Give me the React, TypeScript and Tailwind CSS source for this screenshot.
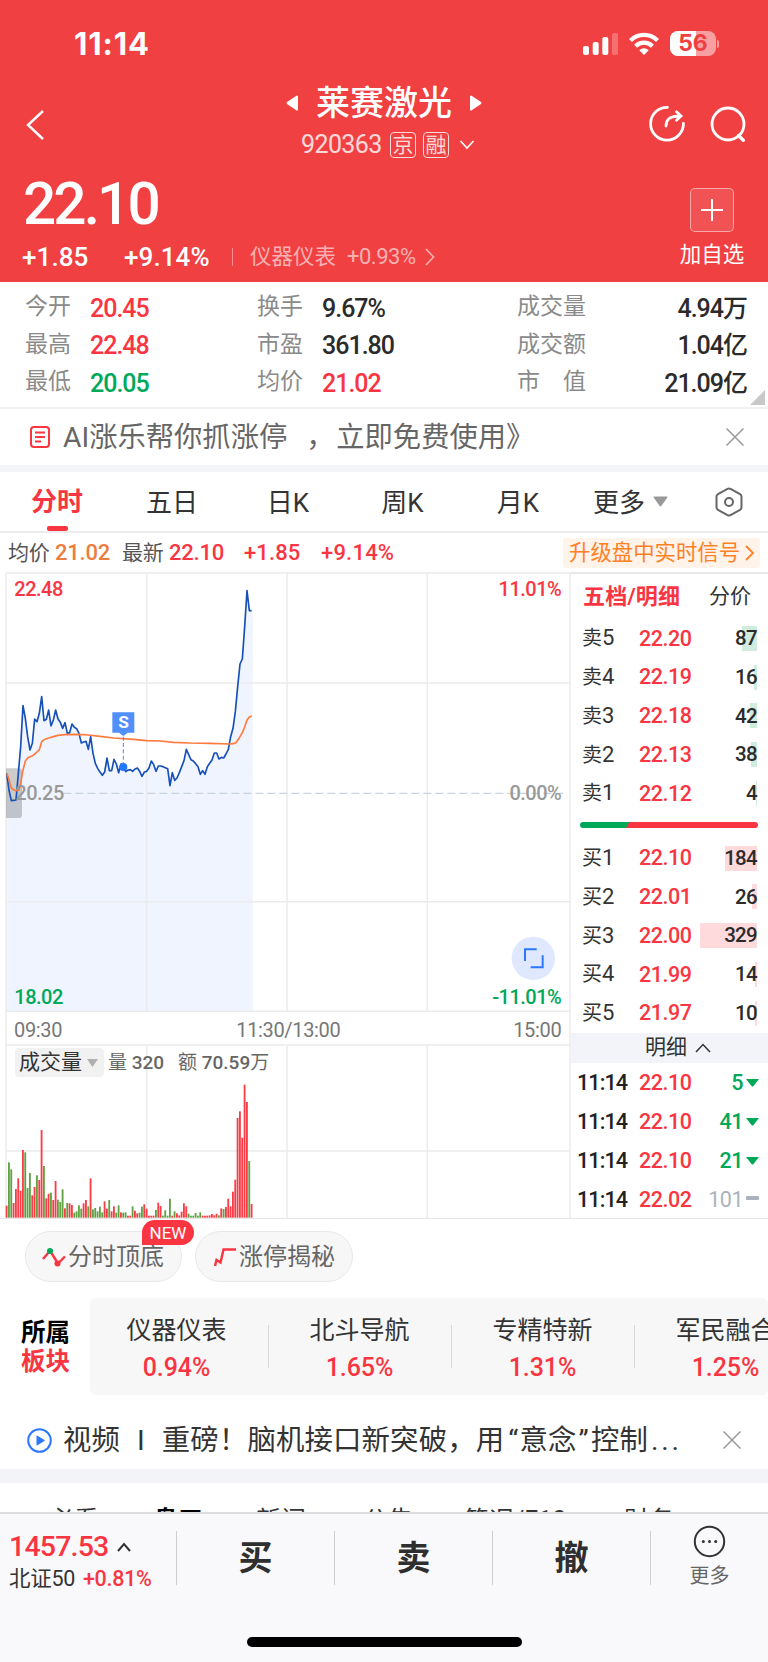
import type { ReactNode } from 'react'
import clsx from 'clsx'

const UP = 'text-[#fa3542]'
const DOWN = 'text-[#00a85a]'

// One sample per minute from 09:30, 7 units apart, in the price chart's own units
const PRICE = [
  640, 690, 722, 721, 720, 640, 560, 437, 475, 530, 570, 550, 477, 485, 460, 410, 482, 478, 450, 498,
  480, 450, 477, 487, 505, 488, 520, 518, 492, 502, 506, 520, 549, 546, 544, 568, 530, 580, 610, 625,
  636, 646, 636, 594, 632, 632, 598, 612, 638, 612, 621, 635, 630, 629, 634, 627, 624, 634, 649, 636,
  634, 624, 603, 614, 634, 618, 618, 620, 623, 626, 677, 638, 661, 654, 638, 620, 602, 568, 584, 599,
  603, 611, 620, 643, 632, 643, 620, 610, 600, 579, 579, 597, 592, 594, 582, 568, 530, 505, 455, 380,
  312, 297, 200, 92, 152, 152,
]

const AVERAGE =
  '20,640 26,655 33,682 40,689 48,692 57,690 62,670 68,635 76,603 83,594 90,590 98,587 108,579 118,569 125,545 132,539 146,534 160,530 174,526 195,524 237,523 265,525 300,529 342,534 400,538 440,542 480,543 520,547 570,549 630,550 688,552 700,551 708,548 715,538 727,518 734,501 741,480 748,471 755,468'

// Negative means the minute closed down
const VOLUME = [
  36, -166, -145, 44, 86, 118, 81, 203, -196, -89, -134, 67, 92, -127, 113, 263, -155, 58, 72, -75,
  53, 110, -54, -47, -85, 28, -44, 43, 38, -15, -19, -37, -27, 43, 53, -34, 118, -25, -29, -19, -33,
  -16, 49, 27, -53, 19, 34, -15, -37, 16, -15, -16, 6, 6, -34, 21, 13, -15, -33, 40, 27, 6, 6, 6,
  -23, 45, 35, -6, -22, -6, -57, 6, -19, 13, 7, 18, 43, 34, -12, -6, -6, -14, -6, -16, 6, 6, 6, 7,
  11, 7, 12, -7, 28, -26, 32, 57, 34, 78, 114, 299, 319, 240, 399, 347, -170, 41,
]

const SELLS = [
  { label: '卖5', price: '22.20', qty: 87, bar: 15.5 },
  { label: '卖4', price: '22.19', qty: 16, bar: 3 },
  { label: '卖3', price: '22.18', qty: 42, bar: 7 },
  { label: '卖2', price: '22.13', qty: 38, bar: 6.5 },
  { label: '卖1', price: '22.12', qty: 4, bar: 0.7 },
]

const BUYS = [
  { label: '买1', price: '22.10', qty: 184, bar: 32 },
  { label: '买2', price: '22.01', qty: 26, bar: 5 },
  { label: '买3', price: '22.00', qty: 329, bar: 57 },
  { label: '买4', price: '21.99', qty: 14, bar: 2.3 },
  { label: '买5', price: '21.97', qty: 10, bar: 1.6 },
]

const TICKS = [
  { price: '22.10', qty: 5, down: true },
  { price: '22.10', qty: 41, down: true },
  { price: '22.10', qty: 21, down: true },
  { price: '22.02', qty: 101, down: false },
]

const SECTORS = [
  { name: '仪器仪表', pct: '0.94%' },
  { name: '北斗导航', pct: '1.65%' },
  { name: '专精特新', pct: '1.31%' },
  { name: '军民融合', pct: '1.25%' },
]

function StatusBar() {
  return (
    <div className="h-[84px] pt-[26px] pl-[74px] pr-[49px] flex items-start justify-between">
      <span className="font-['Inter'] font-bold text-[31px] leading-9 tracking-[0.900px]">11:14</span>
      <div className="flex items-center pt-[5px]">
        <svg width="36" height="24" viewBox="0 0 36 24" fill="#fff">
          <rect x="0" y="14" width="6" height="9" rx="2" />
          <rect x="9.7" y="10" width="6" height="13" rx="2" />
          <rect x="19.3" y="5" width="6" height="18" rx="2" />
          <rect x="29" y="1" width="6" height="22" rx="2" opacity=".25" />
        </svg>
        <svg className="ml-[9px]" width="32" height="24" viewBox="0 0 32 24" fill="none" stroke="#fff" strokeWidth="4.2">
          <path d="M2.5 8.6a19 19 0 0 1 27 0" />
          <path d="M7.6 14.2a11.8 11.8 0 0 1 16.800 0" />
          <path d="M11.300 18.200a6.800 6.800 0 0 1 9.400 0L16 23Z" fill="#fff" stroke="none" />
        </svg>
        <div className="ml-[10px] relative w-[46px] h-[25px] rounded-[8px] overflow-hidden bg-white/50">
          <div className="w-[26px] h-full bg-white" />
          <span className="absolute inset-0 text-center font-['Inter'] font-bold text-[23px] leading-[25px] text-[#f03e41]">
            56
          </span>
        </div>
        <div className="ml-[1px] w-[2px] h-[8px] rounded-r bg-white/50" />
      </div>
    </div>
  )
}

function Header() {
  return (
    <header className="h-[282px] bg-[#f04042] text-white">
      <StatusBar />
      <div className="h-[80px] flex">
        <div className="w-[270px] pt-[25px] pl-[25px]">
          <svg width="20" height="32" viewBox="0 0 20 32" fill="none" stroke="#fff" strokeWidth="2.4">
            <path d="M18 2 3 16l15 14" />
          </svg>
        </div>
        <div className="w-[228px]">
          <div className="h-[37px] flex items-center justify-center">
            <svg width="12" height="16" viewBox="0 0 12 16" fill="#fff">
              <path d="M12 1v14q-1 1-2 0L1 9q-1-1 0-2l9-6q1-1 2 0" />
            </svg>
            <span className="mx-[18px] text-[34px] leading-none font-medium">莱赛激光</span>
            <svg width="12" height="16" viewBox="0 0 12 16" fill="#fff">
              <path d="M0 1v14q1 1 2 0l9-6q1-1 0-2L2 1q-1-1-2 0" />
            </svg>
          </div>
          <div className="h-[46px] flex items-center pl-[31px] pt-px text-white/80">
            <span className="w-[89px] text-[25px] tracking-[-0.600px] leading-none">920363</span>
            <span className="size-[26px] rounded-[4px] border border-white/80 text-[21px] leading-[24px] text-center">京</span>
            <span className="ml-[7px] size-[26px] rounded-[4px] border border-white/80 text-[21px] leading-[24px] text-center">融</span>
            <svg className="ml-[10px]" width="16" height="10" viewBox="0 0 16 10" fill="none" stroke="#fff" strokeWidth="1.6">
              <path d="m1.500 1 6.500 7 6.500-7" />
            </svg>
          </div>
        </div>
        <div className="flex-1 flex justify-end gap-[23px] pt-[21px] pr-[21px]">
          <svg width="38" height="38" viewBox="0 0 38 38" fill="none" stroke="#fff" strokeWidth="2.800" strokeLinecap="round">
            <path d="M19.500 2.300A16.400 16.400 0 1 0 35.400 18.500" />
            <path d="M18 21c0-6 3-10 14.500-10M28.500 6.800l4.500 4.200-4.500 4.200" />
          </svg>
          <svg width="38" height="38" viewBox="0 0 38 38" fill="none" stroke="#fff" strokeWidth="2.800" strokeLinecap="round">
            <circle cx="19" cy="19" r="16" />
            <path d="m29.500 30.500 4.800 4.800" strokeWidth="3.400" />
          </svg>
        </div>
      </div>
      <div className="flex justify-between pl-[23px]">
        <div>
          <div className="mt-[12px] h-[56px] text-[58.500px] leading-[56px] font-medium tracking-[-2.900px]">22.10</div>
          <div className="mt-[9px] h-[32px] flex items-center text-[26px] leading-none font-medium tracking-[0.100px]">
            <span className="w-[101px] -ml-px mr-px">+1.85</span>
            <span className="w-[108px]">+9.14%</span>
            <span className="w-px h-[18px] mr-[17px] bg-white/40" />
            <span className="text-[21.500px] tracking-normal font-normal text-white/60">仪器仪表</span>
            <span className="ml-[11px] text-[22px] tracking-[-0.500px] font-normal text-white/60">+0.93%</span>
            <svg className="ml-[9px]" width="10" height="18" viewBox="0 0 10 18" fill="none" stroke="#fff" strokeOpacity=".6" strokeWidth="1.6">
              <path d="m1 1 7.500 8L1 17" />
            </svg>
          </div>
        </div>
        <div className="w-[112px] flex flex-col items-center">
          <div className="mt-[24px] size-[44px] rounded-[5px] border border-white/50 bg-white/10 flex items-center justify-center">
            <svg width="22" height="22" viewBox="0 0 22 22" stroke="#fff" strokeWidth="2">
              <path d="M11 0v22M0 11h22" />
            </svg>
          </div>
          <span className="mt-[12px] text-[21.500px] leading-none">加自选</span>
        </div>
      </div>
    </header>
  )
}

function Stat({ label, value, color = 'text-[#2b2b2b]' }: { label: ReactNode; value: string; color?: string }) {
  return (
    <div className="flex items-center h-[37.600px]">
      <span className="text-[23px] leading-none text-[#8a8a8a] w-[65px] whitespace-nowrap">{label}</span>
      <span className={clsx('text-[25px] leading-none font-medium tracking-[-1px] pt-[3px]', color)}>{value}</span>
    </div>
  )
}

function Stats() {
  return (
    <section className="relative h-[127px] flex pt-[6px] pl-[25px] border-b-2 border-[#f1f1f3]">
      <div className="w-[232px]">
        <Stat label="今开" value="20.45" color={UP} />
        <Stat label="最高" value="22.48" color={UP} />
        <Stat label="最低" value="20.05" color={DOWN} />
      </div>
      <div className="w-[260px]">
        <Stat label="换手" value="9.67%" />
        <Stat label="市盈" value="361.80" />
        <Stat label="均价" value="21.02" color={UP} />
      </div>
      <div className="w-[230px] [&>div]:justify-between">
        <Stat label="成交量" value="4.94万" />
        <Stat label="成交额" value="1.04亿" />
        <Stat label="市　值" value="21.09亿" />
      </div>
      <svg className="absolute right-[3px] bottom-[2px]" width="15" height="15" viewBox="0 0 15 15" fill="#c8c8c8">
        <path d="M15 0v15H0Z" />
      </svg>
    </section>
  )
}

function Close() {
  return (
    <svg width="18" height="18" viewBox="0 0 18 18" stroke="#999" strokeWidth="1.500">
      <path d="m.5.5 17 17M17.500.5l-17 17" />
    </svg>
  )
}

function Banner() {
  return (
    <div className="h-[56px] flex items-center pl-[30px] pr-[24px] text-[28.300px] text-[#666]">
      <svg width="20" height="22" viewBox="0 0 20 22" fill="none" stroke="#fa3542" strokeWidth="2">
        <rect x="1" y="1" width="18" height="20" rx="3" />
        <path d="M5 6.500h10M5 11h10M5 15.500h6" />
      </svg>
      <span className="ml-[13px] pt-[3px] leading-none">AI涨乐帮你抓涨停</span>
      <span className="ml-[19px] pt-[3px] w-[30px] leading-none">，</span>
      <span className="flex-1 pt-[3px] leading-none">立即免费使用》</span>
      <Close />
    </div>
  )
}

function PeriodTabs() {
  return (
    <nav className="h-[61px] flex items-center border-b-2 border-[#ececee] text-[26px] leading-none text-[#333]">
      <span className={clsx('relative w-[116px] h-full pl-[31px] leading-[61px] font-bold', UP)}>
        分时
        <span className="absolute left-[47px] bottom-[0px] w-[21px] h-[5px] rounded-[2px] bg-[#fa3542]" />
      </span>
      <span className="w-[112px] pt-[2px] text-center">五日</span>
      <span className="w-[120px] pt-[2px] text-center">日K</span>
      <span className="w-[109px] pt-[2px] text-center">周K</span>
      <span className="w-[122px] pt-[2px] text-center">月K</span>
      <span className="ml-[14px] pt-[2px]">更多</span>
      <svg className="ml-[8px]" width="15" height="11" viewBox="0 0 15 11" fill="#999">
        <path d="M1.500.5h12q1.500 0 .7 1.200l-5.700 8q-1 1.300-2 0L.8 1.700Q0 .5 1.500.5" />
      </svg>
      <svg className="ml-[46px]" width="30" height="30" viewBox="0 0 30 30" fill="none" stroke="#666" strokeWidth="2">
        <path d="M13.500 1.800q1.500-.8 3 0l9.500 5.300q1.500.9 1.500 2.600v10.600q0 1.700-1.500 2.600l-9.500 5.300q-1.500.8-3 0L4 22.900q-1.500-.9-1.500-2.600V9.700q0-1.700 1.500-2.600Z" />
        <circle cx="15" cy="15" r="4" />
      </svg>
    </nav>
  )
}

function QuoteLine() {
  return (
    <div className="h-[39px] flex items-center pt-px pl-[8px] pr-[8px] text-[22px] leading-none tracking-[-0.200px]">
      <span className="w-[47px] text-[21px] text-[#555]">均价</span>
      <span className="w-[67px] font-medium text-[#ed7d3f]">21.02</span>
      <span className="w-[47px] text-[21px] text-[#555]">最新</span>
      <span className={clsx('w-[75px] font-medium', UP)}>22.10</span>
      <span className={clsx('w-[77px] font-medium tracking-[0.100px]', UP)}>+1.85</span>
      <span className={clsx('flex-1 font-medium tracking-[0.200px]', UP)}>+9.14%</span>
      <span className="w-[197px] h-[30px] rounded-[3px] bg-[#fff3ea] pl-[6px] flex items-center text-[21.400px] tracking-normal text-[#ff8025]">
        升级盘中实时信号
        <svg className="ml-[5px]" width="10" height="16" viewBox="0 0 10 16" fill="none" stroke="#ff8025" strokeWidth="1.800">
          <path d="m1 1 7 7-7 7" />
        </svg>
      </span>
    </div>
  )
}

function PriceChart() {
  const line = PRICE.map((y, i) => `${20 + i * 7},${y}`).join(' ')
  return (
    <svg className="block" width="571" height="474" viewBox="0 36 1713 1422" fill="none">
      <polygon points={`20,1353 ${line} 758,152 758,1353`} fill="#eff4ff" />
      <g stroke="#ebebed" strokeWidth="4.500">
        <path d="M18 39H1713M18 369H1710M18 1025H1710M18 1354H1710M18 1455H1710" />
        <path d="M18 39V1458M440 39V1354M861 39V1354M1282 39V1354M1710 39V1458" />
      </g>
      <path d="M190 700H1702" stroke="#c9d3df" strokeWidth="3.500" strokeDasharray="24 12" />
      <path d="M18 625H56q10 0 10 10v129q0 10-10 10H18Z" fill="#000" fillOpacity=".2" />
      <polyline points={line} stroke="#1650b8" strokeWidth="5" strokeLinejoin="round" />
      <polyline points={AVERAGE} stroke="#ff7a3d" strokeWidth="5" strokeLinejoin="round" />
      <path d="M370 530V610" stroke="#4a8cf7" strokeWidth="3" strokeDasharray="12 7" />
      <circle cx="370" cy="621" r="12" fill="#2478ff" />
      <path d="M337 457h66v61h-20l-13 10-13-10h-20Z" fill="#508ffc" />
      <circle cx="1600" cy="1195" r="65" fill="#dfe8fe" />
      <path d="M1575 1203v-35h35M1592 1222h36v-36" stroke="#2b78ff" strokeWidth="6" />
      <g className="font-medium" fontSize="60" letterSpacing="-1.5">
        <text x="370" y="505" fontSize="52" textAnchor="middle" fill="#fff" className="font-bold">S</text>
        <text x="43" y="109" fill="#fa3542">22.48</text>
        <text x="1684" y="109" textAnchor="end" fill="#fa3542">11.01%</text>
        <text x="46" y="721" fill="#999">20.25</text>
        <text x="1684" y="721" textAnchor="end" fill="#999">0.00%</text>
        <text x="43" y="1331" fill="#00a85a">18.02</text>
        <text x="1684" y="1331" textAnchor="end" fill="#00a85a">-11.01%</text>
      </g>
      <g fontSize="60" letterSpacing="-1" fill="#777">
        <text x="42" y="1430">09:30</text>
        <text x="865" y="1430" textAnchor="middle">11:30/13:00</text>
        <text x="1684" y="1430" textAnchor="end">15:00</text>
      </g>
    </svg>
  )
}

function VolumeChart() {
  return (
    <div className="relative">
      <svg className="block" width="571" height="173" viewBox="0 738 1713 519" fill="none">
        <g stroke="#ebebed" strokeWidth="4.500">
          <path d="M18 1053H1710" />
          <path d="M18 738V1254M440 738V1254M861 738V1254M1282 738V1254M1710 738V1254" />
        </g>
        {VOLUME.map((v, i) => {
          const h = Math.abs(v)
          return <rect key={i} x={17 + i * 7} y={1253 - h} width="5.500" height={h} fill={v > 0 ? '#fa3c46' : '#5fa243'} />
        })}
      </svg>
      <div className="absolute left-[15px] top-[2px] flex items-center text-[19px] leading-none text-[#666]">
        <span className="w-[89px] h-[29px] rounded-[4px] bg-[#f1f1f1] pl-[4px] flex items-center text-[21px] text-[#333]">
          成交量
          <svg className="ml-[5px]" width="11" height="8" viewBox="0 0 11 8" fill="#b0b0b0">
            <path d="M0 0h11L5.500 8Z" />
          </svg>
        </span>
        <span className="ml-[4px] w-[70px]">量 <span className="font-medium">320</span></span>
        <span>额 <span className="font-medium">70.59</span>万</span>
      </div>
    </div>
  )
}

function BookRow({ label, price, qty, bar, tint }: (typeof SELLS)[number] & { tint: string }) {
  return (
    <div className="h-[38.900px] flex items-center pl-[11px] pr-[11px] text-[21.500px] leading-none">
      <span className="w-[57px] text-[20px] text-[#333]">
        {label[0]}<span className="text-[22px]">{label[1]}</span>
      </span>
      <span className={clsx('font-medium tracking-[-0.500px]', UP)}>{price}</span>
      <span className="relative flex-1 h-[25px] flex items-center justify-end">
        <span className={clsx('absolute right-0 top-0 h-full', tint)} style={{ width: bar }} />
        <span className="relative text-[20.500px] font-medium tracking-[-0.700px] text-[#2b2b2b]">{qty}</span>
      </span>
    </div>
  )
}

function OrderBook() {
  return (
    <div className="w-[197px] h-[646px] border-t-2 border-[#e8e8ea] flex flex-col">
      <div className="h-[45px] shrink-0 flex items-center justify-between pl-[12px] pr-[17px] text-[21px] leading-none">
        <span className={clsx('font-bold text-[22px] tracking-[0.200px]', UP)}>五档/明细</span>
        <span className="text-[#333]">分价</span>
      </div>
      {SELLS.map((r) => (
        <BookRow key={r.label} {...r} tint="bg-[#cfecdf]" />
      ))}
      <div className="mt-[9px] mb-[11px] ml-[9px] w-[178px] h-[6px] shrink-0 rounded-full bg-[linear-gradient(120deg,#00a85a_27%,#fa3542_27.500%)]" />
      {BUYS.map((r) => (
        <BookRow key={r.label} {...r} tint="bg-[#fedadd]" />
      ))}
      <div className="h-[30px] shrink-0 bg-[#f2f4f9] flex items-center justify-center gap-[8px] pl-[17px] text-[21px] leading-none text-[#333]">
        明细
        <svg width="16" height="10" viewBox="0 0 16 10" fill="none" stroke="#333" strokeWidth="1.500">
          <path d="m1 9 7-7.500L15 9" />
        </svg>
      </div>
      {TICKS.map((t, i) => (
        <div key={i} className="h-[38.900px] shrink-0 flex items-center pt-[2px] pl-[6px] pr-[9px] text-[21.500px] leading-none font-medium tracking-[-0.500px]">
          <span className="w-[62px] text-[#222] tracking-[-0.900px]">11:14</span>
          <span className={clsx('flex-1', UP)}>{t.price}</span>
          <span className={clsx('mr-[3px]', t.down ? DOWN : 'text-[#aab3bd] font-normal')}>{t.qty}</span>
          {t.down ? (
            <svg width="13" height="8" viewBox="0 0 13 8" fill="#00a85a"><path d="M0 0h13L7.500 7q-1 1-2 0Z" /></svg>
          ) : (
            <span className="w-[13px] h-[4px] mb-[3px] rounded-[1px] bg-[#aab3bd]" />
          )}
        </div>
      ))}
    </div>
  )
}

function Pills() {
  return (
    <div className="h-[79px] pt-[12px] pl-[25px] flex gap-[13px] text-[24px] leading-none text-[#666]">
      <div className="relative w-[157px] h-[51px] rounded-full border border-[#e8e8e8] bg-[#f7f7f7] flex items-center pl-[16px]">
        <svg className="mr-[2px]" width="24" height="20" viewBox="0 0 24 20" fill="none" stroke="#fa3542" strokeWidth="2.400">
          <path d="m1 12 6-7M9.500 6l5.500 9M16 16.500l7-7" />
          <circle cx="8" cy="4" r="3" fill="#00a85a" stroke="none" />
          <circle cx="15.500" cy="16.500" r="3" fill="#fa3542" stroke="none" />
        </svg>
        分时顶底
        <span className="absolute left-[116px] -top-[12px] w-[52px] h-[25px] rounded-[13px] rounded-bl-none bg-[#fa3542] text-white text-[17px] leading-[27px] text-center">
          NEW
        </span>
      </div>
      <div className="w-[158px] h-[51px] rounded-full border border-[#e8e8e8] bg-[#f7f7f7] flex items-center pl-[17px]">
        <svg className="mr-[2px]" width="24" height="20" viewBox="0 0 24 20" fill="none" stroke="#fa3542" strokeWidth="2.400">
          <path d="m2 19 1.500-6 4 2.500L10.500 2.500H23" />
        </svg>
        涨停揭秘
      </div>
    </div>
  )
}

function Sectors() {
  return (
    <section className="h-[97px] flex">
      <div className="w-[90px] pl-[21px] pt-[20px] text-[24.500px] leading-[29px] font-bold text-black">
        所属
        <div className={UP}>板块</div>
      </div>
      <div className="w-[678px] rounded-[6px] bg-[#f7f7f7] flex overflow-hidden">
        {SECTORS.map((s, i) => (
          <div key={s.name} className={clsx('relative shrink-0 flex flex-col items-center', i ? 'w-[183px]' : 'w-[179px] pr-[4px]')}>
            <span className="mt-[20px] -ml-[2px] text-[25px] leading-[25px] text-[#333]">{s.name}</span>
            <span className={clsx('-ml-[2px] mt-[12px] text-[25px] leading-[25px] font-medium tracking-[-0.100px]', UP)}>{s.pct}</span>
            {i < 3 && <span className="absolute right-0 top-[27px] w-[1.500px] h-[43px] bg-[#d8d8d8]" />}
          </div>
        ))}
      </div>
    </section>
  )
}

function VideoLine() {
  return (
    <div className="h-[74px] pt-[16px] flex items-center pl-[27px] pr-[27px] text-[28.400px] leading-none text-[#333]">
      <svg width="25" height="25" viewBox="0 0 25 25" fill="none">
        <circle cx="12.500" cy="12.500" r="11.300" stroke="#2b78ff" strokeWidth="2" />
        <path d="M9.500 8.200v8.600q0 1 .9.500l7-4.300q.7-.5 0-1l-7-4.300q-.9-.5-.9.500" fill="#2b78ff" />
      </svg>
      <span className="ml-[11px] pt-[3px]">视频</span>
      <span className="w-[42px] pt-[3px] text-center">I</span>
      <span className="flex-1 pt-[3px] whitespace-nowrap tracking-[0.150px]">
        重磅！脑机接口新突破，用<span className="pl-[4px] pr-[1px]">“</span>意念<span className="pl-[2px] pr-[2px]">”</span>控制
        <span className="pl-[3px] tracking-[2.800px]">...</span>
      </span>
      <Close />
    </div>
  )
}

function BottomBar() {
  return (
    <footer className="h-[150px] border-t-2 border-[#dcdcde] bg-[#f9f9fb]">
      <div className="flex h-[88px] items-center">
        <div className="w-[176px] pl-[9px] pt-[6px]">
          <div className={clsx('flex items-center text-[28.500px] leading-[36px] font-medium tracking-[-0.800px]', UP)}>
            1457.53
            <svg className="ml-[8px]" width="14" height="10" viewBox="0 0 14 10" fill="none" stroke="#333" strokeWidth="2">
              <path d="m1 9 6-7 6 7" />
            </svg>
          </div>
          <div className="flex items-center text-[21.500px] leading-[28px] text-[#333] tracking-[-0.300px]">
            北证50
            <span className={clsx('ml-[8px] font-medium', UP)}>+0.81%</span>
          </div>
        </div>
        {['买', '卖', '撤'].map((a) => (
          <button
            key={a}
            className="w-[158px] h-[54px] border-l border-[#cfcfd3] text-[34px] leading-none font-bold text-[#2f2f2f]"
          >
            {a}
          </button>
        ))}
        <div className="flex-1 h-[54px] border-l border-[#cfcfd3] flex flex-col items-center">
          <svg className="-mt-[6px] shrink-0" width="33" height="33" viewBox="0 0 33 33" fill="none">
            <circle cx="16.500" cy="16.500" r="14.700" stroke="#333" strokeWidth="2" />
            <g fill="#333">
              <circle cx="10.300" cy="16.500" r="1.500" />
              <circle cx="16.500" cy="16.500" r="1.500" />
              <circle cx="22.700" cy="16.500" r="1.500" />
            </g>
          </svg>
          <span className="mt-[8px] text-[20px] leading-none text-[#666]">更多</span>
        </div>
      </div>
      <div className="mx-auto mt-[35px] w-[275px] h-[10px] rounded-full bg-black" />
    </footer>
  )
}

export default function App() {
  return (
    <div className="w-[768px] h-[1662px] overflow-hidden bg-white font-['Roboto','Noto_Sans_CJK_SC',sans-serif]">
      <Header />
      <Stats />
      <Banner />
      <div className="h-[7px] bg-[#f2f4f8]" />
      <PeriodTabs />
      <QuoteLine />
      <div className="flex h-[647px] border-b border-[#e6e6e8]">
        <div className="w-[571px] overflow-hidden">
          <PriceChart />
          <VolumeChart />
        </div>
        <OrderBook />
      </div>
      <Pills />
      <Sectors />
      <VideoLine />
      <div className="h-[14px] bg-[#f2f4f8]" />
      {/* Info tabs slide under the trading bar */}
      <div className="h-[29px] overflow-hidden pt-[25px] pl-[49px] flex text-[25px] leading-none text-[#333] whitespace-nowrap">
        <span className="w-[104px]">必看</span>
        <span className="w-[103px] font-bold text-black">盘口</span>
        <span className="w-[107px]">新闻</span>
        <span className="w-[101px]">公告</span>
        <span className="w-[160px]">简况/F10</span>
        <span>财务</span>
      </div>
      <BottomBar />
    </div>
  )
}
